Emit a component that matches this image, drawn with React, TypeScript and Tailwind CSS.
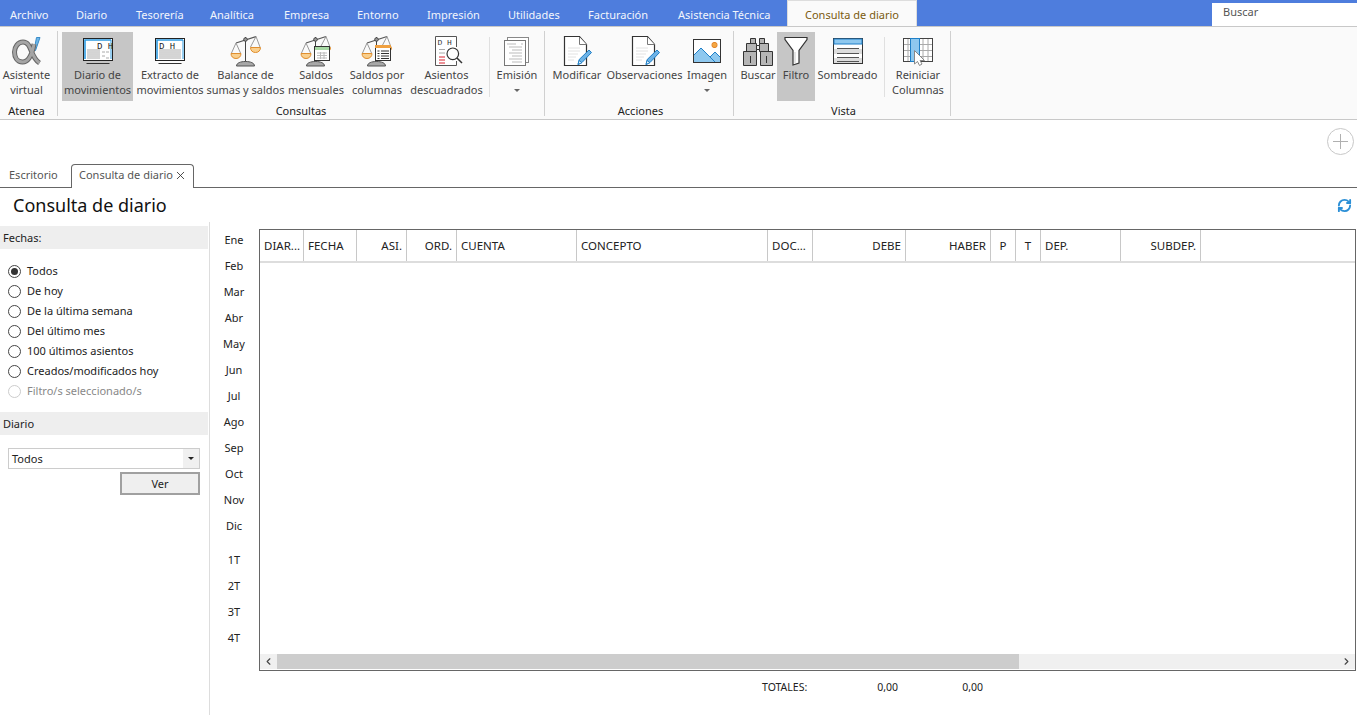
import React from "react";
import { RefreshCw, X, ChevronLeft, ChevronRight } from "lucide-react";

const menus = [
  { label: "Archivo", w: "w-[66px]" },
  { label: "Diario", w: "w-[60px]" },
  { label: "Tesorería", w: "w-[74px]" },
  { label: "Analítica", w: "w-[74px]" },
  { label: "Empresa", w: "w-[73px]" },
  { label: "Entorno", w: "w-[70px]" },
  { label: "Impresión", w: "w-[81px]" },
  { label: "Utilidades", w: "w-[80px]" },
  { label: "Facturación", w: "w-[90px]" },
  { label: "Asistencia Técnica", w: "w-[119px]" },
];

const Screen = ({ head, right }: { head: string; right?: boolean }) => (
  <svg width="32" height="28" viewBox="0 0 32 28">
    <rect x="1.5" y="1.5" width="29" height="22" fill="#fff" stroke="#222" />
    <path d="M3 22V3h26" fill="none" stroke="#2f9be0" strokeWidth="1.6" />
    <path d="M29 3v19" stroke="#2f9be0" strokeWidth="1" />
    <text x={right ? 15 : 5} y="11.500" fontSize="9" fill="#222" fontFamily="Liberation Mono">{head}</text>
    {[13, 15, 17, 19, 21].map((y) => (
      <path key={y} d={`M5 ${y}h${right ? 13 : 22}`} stroke="#aaa" />
    ))}
    {right && <path d="M20 15h3M24 15h3M20 19h3M24 21h3" stroke="#aaa" />}
    <path d="M4.5 26.5h23" stroke="#333" />
  </svg>
);

const Scale = ({ extra }: { extra?: "calendar" | "list" }) => (
  <svg width="32" height="32" viewBox="0 0 32 32">
    <path d="M6 8 26 1.5" stroke="#555" strokeWidth="1.3" fill="none" />
    <path d="M15.5 2v25" stroke="#444" />
    <path d="M6 8 1.5 18M6 8l4.5 10M26 1.5 20.5 12M26 1.5 30 12" stroke="#999" fill="none" />
    <path d="M1 18.5h10c0 3-2 5-5 5s-5-2-5-5z" fill="#f9cf8d" stroke="#e08e2e" />
    <path d="M20.5 12.5h10c0 3-2 5-5 5s-5-2-5-5z" fill="#f9cf8d" stroke="#e08e2e" />
    <circle cx="15.5" cy="4.5" r="1.8" fill="#999" stroke="#444" />
    <path d="M6.5 31c0-3 4-4.500 9-4.500s9 1.500 9 4.500z" fill="#a8a8a8" stroke="#555" />
    {extra === "calendar" && (
      <g>
        <rect x="14.500" y="11.500" width="15" height="14" fill="#fff" stroke="#333" />
        <rect x="15" y="12" width="14" height="3" fill="#a6d8a3" />
        <path d="M17 18h10M17 20.500h10M17 23h10M20.500 17v7M24 17v7" stroke="#bbb" />
      </g>
    )}
    {extra === "list" && (
      <g>
        <rect x="14.500" y="11.500" width="15" height="14" fill="#fff" stroke="#333" />
        <rect x="14" y="10" width="16" height="3" fill="#f0a040" />
        <path d="M16.500 16h2M20 16h8M16.500 18.500h2M20 18.500h8M16.500 21h2M20 21h8M16.500 23.500h2M20 23.500h8" stroke="#333" />
      </g>
    )}
  </svg>
);

const Doc = () => (
  <svg width="32" height="32" viewBox="0 0 32 32">
    <path d="M3.500 1.500h15l7 8v21h-22z" fill="#fff" stroke="#333" strokeWidth="1.200" />
    <path d="M18.500 2v7.500h7" fill="#fff" stroke="#777" />
    <path d="M7 13h12M7 16h12M7 19h10M7 22h8M7 25h6" stroke="#e2e2e2" />
    <path d="M17 29.500l1.200-5L28 15l2.500 2.500-9.500 10z" fill="#6db2e6" stroke="#1f7fc7" />
    <path d="M17 29.500l1.200-4 2.600 2.200z" fill="#fff" stroke="#1f7fc7" />
  </svg>
);

const icons: Record<string, React.ReactNode> = {
  alpha: (
    <svg width="34" height="32" viewBox="0 0 34 32">
      <path d="M26.500 2.500H30L25.500 15.500H24z" fill="#6db7ea" stroke="#3a8cc7" />
      <path d="M24 9C22 20 19 27 12.500 27 7 27 4.500 22 4.500 17S8 7 13 7c9 0 7 15 16.500 21" fill="none" stroke="#666" strokeWidth="5" />
      <path d="M24 9C22 20 19 27 12.500 27 7 27 4.500 22 4.500 17S8 7 13 7c9 0 7 15 16.500 21" fill="none" stroke="#a5a5a5" strokeWidth="3" />
    </svg>
  ),
  diario: <Screen head="D H" right />,
  extracto: <Screen head="D  H" />,
  balance: <Scale />,
  mensuales: <Scale extra="calendar" />,
  columnas: <Scale extra="list" />,
  descuadrados: (
    <svg width="32" height="32" viewBox="0 0 32 32">
      <path d="M25.500 12V1.500h-21v29h21V26" fill="#fff" stroke="#555" />
      <text x="6.500" y="10" fontSize="8" fill="#333" fontFamily="Liberation Mono">D  H</text>
      <path d="M8 14.500h6M8 18h6" stroke="#aaa" />
      <path d="M8 22h6M8 25h6M8 28h6" stroke="#d9232e" />
      <circle cx="21.800" cy="18.800" r="5.800" fill="#fff" stroke="#333" strokeWidth="1.200" />
      <path d="M26 23l5 5" stroke="#333" strokeWidth="1.500" />
    </svg>
  ),
  emision: (
    <svg width="30" height="32" viewBox="0 0 30 32">
      <rect x="5.500" y="2.500" width="21" height="25" fill="#fff" stroke="#888" />
      <rect x="2.500" y="5.500" width="21" height="25" fill="#fff" stroke="#777" />
      <path d="M5 9h9M19 9h2M7 12h13M10 15h10M7 18h13M10 21h10M7 24h13M10 27h10" stroke="#bbb" />
    </svg>
  ),
  doc: <Doc />,
  imagen: (
    <svg width="30" height="26" viewBox="0 0 30 26">
      <rect x="1.500" y="1.500" width="27" height="23" fill="#fff" stroke="#333" />
      <path d="M2 17l7-7 9 9 5-5 5 5v5H2z" fill="#8ec8ef" />
      <path d="M2 17l7-7 9 9 5-5 5 5M18 19l5 5" fill="none" stroke="#1f7fc7" />
      <rect x="20" y="4.500" width="5" height="5" rx="2" fill="#f5a742" stroke="#e2842a" />
    </svg>
  ),
  buscar: (
    <svg width="32" height="32" viewBox="0 0 32 32">
      <path d="M8.500 3.500h5v5h-5zM17.500 3.500h5v5h-5z" fill="#b5b5b5" stroke="#333" />
      <path d="M4.500 8.500h10v8h-10zM17.500 8.500h9v8h-9z" fill="#b5b5b5" stroke="#333" />
      <path d="M14.500 10.500h3v4h-3z" fill="#eee" stroke="#333" />
      <path d="M1.500 16.500h13v14h-13zM18.500 16.500h12v14h-12z" fill="#b5b5b5" stroke="#333" />
      <path d="M8.500 21v7M24.500 21v7" stroke="#333" />
    </svg>
  ),
  filtro: (
    <svg width="24" height="32" viewBox="0 0 24 32">
      <path d="M1 2.500h22v2L15 15.500V28l-6 2V15.500L1 4.500z" fill="#fff" stroke="#333" strokeWidth="1.200" />
      <path d="M11 17v11" stroke="#ccc" />
    </svg>
  ),
  sombreado: (
    <svg width="30" height="28" viewBox="0 0 30 28">
      <rect x="0.500" y="1.500" width="29" height="25" fill="#fff" stroke="#333" />
      <rect x="1" y="2" width="28" height="5" fill="#8ec8ef" stroke="#1f7fc7" />
      <rect x="1" y="12" width="28" height="5" fill="#ddd" />
      <rect x="1" y="21" width="28" height="5" fill="#ddd" />
      <path d="M4 11.500h22M4 16.500h22M4 20.500h22M4 24.500h22" stroke="#555" />
    </svg>
  ),
  reiniciar: (
    <svg width="30" height="30" viewBox="0 0 30 30">
      <rect x="0.500" y="2.500" width="29" height="23" fill="#fff" stroke="#444" />
      <path d="M20 3v22M25 3v22M1 8.500h28M1 14.500h28M1 20.500h28M5 3v22" stroke="#aaa" />
      <rect x="7.500" y="2.500" width="9" height="23" fill="#8ec8ef" stroke="#1f7fc7" />
      <path d="M11.500 14.500V28l3-2.500 2 4 2.500-1.500-2-3.500h4.500z" fill="#fff" stroke="#888" />
    </svg>
  ),
};

type Btn = { icon: string; l1: string; l2?: string; w: string; on?: boolean; arrow?: boolean };

const RibbonButton = ({ b }: { b: Btn }) => (
  <div className={`${b.w} h-[69px] flex flex-col items-center shrink-0 ${b.on ? "bg-[#c6c6c6]" : ""}`}>
    <div className="h-[35px] pt-[2px] flex items-center justify-center">{icons[b.icon]}</div>
    <div className="text-center leading-[15px] whitespace-nowrap">{b.l1}</div>
    {b.l2 && <div className="text-center leading-[15px] whitespace-nowrap">{b.l2}</div>}
    {b.arrow && <div className="mt-[7px] w-0 h-0 border-x-[3px] border-x-transparent border-t-[3px] border-t-[#666]" />}
  </div>
);

const Group = ({ label, w, pl, children }: { label: string; w: string; pl: string; children: React.ReactNode }) => (
  <div className={`${w} shrink-0 h-[85px] border-r border-[#d0d0d0] flex flex-col ${pl} mt-[4px]`}>
    <div className="flex h-[69px] mt-[1px] shrink-0">{children}</div>
    <div className="text-center text-[#222] leading-[20px] -ml-[4px]">{label}</div>
  </div>
);

const Divider = ({ m }: { m: string }) => <div className={`w-px h-[60px] bg-[#e0e0e0] shrink-0 mt-[5px] ${m}`} />;

const columns = [
  { t: "DIAR...", w: "w-[44px]", a: "text-left" },
  { t: "FECHA", w: "w-[53px]", a: "text-left" },
  { t: "ASI.", w: "w-[50px]", a: "text-right" },
  { t: "ORD.", w: "w-[50px]", a: "text-right" },
  { t: "CUENTA", w: "w-[120px]", a: "text-left" },
  { t: "CONCEPTO", w: "w-[191px]", a: "text-left" },
  { t: "DOC...", w: "w-[45px]", a: "text-left" },
  { t: "DEBE", w: "w-[93px]", a: "text-right" },
  { t: "HABER", w: "w-[85px]", a: "text-right" },
  { t: "P", w: "w-[25px]", a: "text-center" },
  { t: "T", w: "w-[25px]", a: "text-center" },
  { t: "DEP.", w: "w-[80px]", a: "text-left" },
  { t: "SUBDEP.", w: "w-[80px]", a: "text-right" },
];

const radios = ["Todos", "De hoy", "De la última semana", "Del último mes", "100 últimos asientos", "Creados/modificados hoy", "Filtro/s seleccionado/s"];
const months = ["Ene", "Feb", "Mar", "Abr", "May", "Jun", "Jul", "Ago", "Sep", "Oct", "Nov", "Dic"];
const quarters = ["1T", "2T", "3T", "4T"];

export default function App() {
  return (
    <div className="w-[1357px] h-[715px] overflow-hidden bg-white text-[#333] text-[11px] font-['Noto_Sans','Open_Sans',sans-serif] flex flex-col">
      {/* Menu bar */}
      <div className="h-[26px] bg-[#4e7ddd] flex shrink-0 text-[#f2f5fc]">
        {menus.map((m) => (
          <div key={m.label} className={`${m.w} shrink-0 h-[26px] pl-[10px] leading-[30px] whitespace-nowrap`}>{m.label}</div>
        ))}
        <div className="w-[130px] h-[27px] bg-[#fafafa] border-x border-t border-[#ddd] text-[#7a5a10] text-center leading-[28px]">Consulta de diario</div>
        <div className="w-[145px] h-[24px] bg-white border-b border-[#777] mt-[3px] ml-auto pl-[11px] text-[#555] leading-[18px]">Buscar</div>
      </div>

      {/* Ribbon */}
      <div className="h-[94px] bg-[#fafafa] border-y border-[#c8c8c8] flex shrink-0 text-[#444]">
        <Group label="Atenea" w="w-[58px]" pl="pl-0">
          <RibbonButton b={{ icon: "alpha", l1: "Asistente", l2: "virtual", w: "w-[53px]" }} />
        </Group>
        <Group label="Consultas" w="w-[487px]" pl="pl-[4px]">
          <RibbonButton b={{ icon: "diario", l1: "Diario de", l2: "movimientos", w: "w-[71px]", on: true }} />
          <div className="w-[3px]" />
          <RibbonButton b={{ icon: "extracto", l1: "Extracto de", l2: "movimientos", w: "w-[68px]" }} />
          <div className="w-[3px]" />
          <RibbonButton b={{ icon: "balance", l1: "Balance de", l2: "sumas y saldos", w: "w-[77px]" }} />
          <div className="w-[5px]" />
          <RibbonButton b={{ icon: "mensuales", l1: "Saldos", l2: "mensuales", w: "w-[54px]" }} />
          <div className="w-[5px]" />
          <RibbonButton b={{ icon: "columnas", l1: "Saldos por", l2: "columnas", w: "w-[58px]" }} />
          <div className="w-[4px]" />
          <RibbonButton b={{ icon: "descuadrados", l1: "Asientos", l2: "descuadrados", w: "w-[73px]" }} />
          <Divider m="ml-[6px] mr-[6px]" />
          <RibbonButton b={{ icon: "emision", l1: "Emisión", w: "w-[42px]", arrow: true }} />
        </Group>
        <Group label="Acciones" w="w-[189px]" pl="pl-[7px]">
          <RibbonButton b={{ icon: "doc", l1: "Modificar", w: "w-[50px]" }} />
          <div className="w-[5px]" />
          <RibbonButton b={{ icon: "doc", l1: "Observaciones", w: "w-[75px]" }} />
          <div className="w-[6px]" />
          <RibbonButton b={{ icon: "imagen", l1: "Imagen", w: "w-[38px]", arrow: true }} />
        </Group>
        <Group label="Vista" w="w-[217px]" pl="pl-[7px]">
          <RibbonButton b={{ icon: "buscar", l1: "Buscar", w: "w-[34px]" }} />
          <div className="w-[2px]" />
          <RibbonButton b={{ icon: "filtro", l1: "Filtro", w: "w-[38px]", on: true }} />
          <div className="w-[3px]" />
          <RibbonButton b={{ icon: "sombreado", l1: "Sombreado", w: "w-[59px]" }} />
          <Divider m="ml-[7px] mr-[7px]" />
          <RibbonButton b={{ icon: "reiniciar", l1: "Reiniciar", l2: "Columnas", w: "w-[52px]" }} />
        </Group>
      </div>

      {/* Add button row */}
      <div className="h-[44px] flex justify-end items-start shrink-0 pr-[3px] pt-[8px]">
        <div className="w-[27px] h-[27px] rounded-full border border-[#c8c8c8] flex items-center justify-center">
          <svg width="17" height="17" viewBox="0 0 17 17"><path d="M8.500 1v15M1 8.500h15" stroke="#b0b0b0" /></svg>
        </div>
      </div>

      {/* Tabs */}
      <div className="h-[24px] border-b border-[#666] flex items-end shrink-0 text-[#555]">
        <div className="w-[71px] h-[23px] pl-[9px] leading-[22px]">Escritorio</div>
        <div className="w-[123px] h-[24px] -mb-px bg-white border border-b-0 border-[#666] rounded-t-[4px] pl-[7px] flex items-center gap-[1px] whitespace-nowrap pb-[2px]">
          Consulta de diario
          <X size={13} strokeWidth={1.6} className="text-[#333]" />
        </div>
      </div>

      {/* Title */}
      <div className="h-[34px] flex items-center justify-between shrink-0 pl-[13px] pr-[5px]">
        <div className="text-[18px] text-[#111]">Consulta de diario</div>
        <RefreshCw size={15} strokeWidth={3} className="text-[#2b8fd6]" />
      </div>

      {/* Content */}
      <div className="flex-1 flex min-h-0">
        <div className="w-[210px] shrink-0 border-r border-[#ddd] pt-[4px]">
          <div className="w-[208px] h-[23px] bg-[#eeeeee] pl-[3px] leading-[24px] text-[#222]">Fechas:</div>
          <div className="pt-[12px] pl-[8px] flex flex-col">
            {radios.map((r, i) => {
              const off = i === radios.length - 1;
              return (
                <div key={r} className={`h-[20px] flex items-center gap-[6px] ${off ? "text-[#888]" : "text-[#222]"}`}>
                  <span className={`w-[13px] h-[13px] rounded-full border flex items-center justify-center bg-white ${off ? "border-[#ccc]" : "border-[#444]"}`}>
                    {i === 0 && <span className="w-[7px] h-[7px] rounded-full bg-[#333]" />}
                  </span>
                  {r}
                </div>
              );
            })}
          </div>
          <div className="w-[208px] h-[23px] bg-[#eeeeee] pl-[3px] leading-[24px] text-[#222] mt-[11px]">Diario</div>
          <div className="ml-[8px] mt-[13px] w-[192px] h-[21px] border border-[#ccc] flex items-center justify-between">
            <span className="pl-[3px] pt-[2px] text-[#222]">Todos</span>
            <span className="w-[16px] h-[19px] bg-[#f0f0f0] flex items-center justify-center">
              <span className="w-0 h-0 border-x-[3px] border-x-transparent border-t-[3px] border-t-[#222]" />
            </span>
          </div>
          <div className="ml-[120px] mt-[3px] w-[80px] h-[23px] border-2 border-[#a0a0a0] bg-[#efefef] text-center leading-[19px] text-[#222]">Ver</div>
        </div>

        <div className="w-[49px] shrink-0 flex flex-col items-center pt-[5px] text-[#222]">
          {months.map((m) => (
            <div key={m} className="h-[26px] leading-[26px] pr-[1px]">{m}</div>
          ))}
          <div className="h-[8px]" />
          {quarters.map((q) => (
            <div key={q} className="h-[26px] leading-[26px] pr-[1px]">{q}</div>
          ))}
        </div>

        <div className="flex-1 flex flex-col min-w-0 pr-px pt-[7px]">
          <div className="h-[442px] border border-[#666] flex flex-col">
            <div className="h-[33px] border-b-2 border-[#ddd] flex shrink-0 text-[#222] text-[11.5px]">
              {columns.map((c) => (
                <div key={c.t} className={`${c.w} shrink-0 h-[31px] border-r border-[#c8c8c8] px-[4px] leading-[31px] whitespace-nowrap ${c.a}`}>{c.t}</div>
              ))}
            </div>
            <div className="flex-1" />
            <div className="h-[15px] bg-[#f0f0f0] flex items-center mb-px">
              <ChevronLeft size={11} strokeWidth={2.5} className="w-[17px] text-[#444]" />
              <div className="w-[742px] h-[15px] bg-[#cdcdcd]" />
              <div className="flex-1" />
              <ChevronRight size={11} strokeWidth={2.5} className="w-[17px] text-[#444]" />
            </div>
          </div>
          <div className="flex h-[34px] items-center text-[#222] pl-[503px] text-[10.5px]">
            <span className="w-[46px] whitespace-nowrap">TOTALES:</span>
            <span className="w-[90px] text-right">0,00</span>
            <span className="w-[85px] text-right">0,00</span>
          </div>
        </div>
      </div>
    </div>
  );
}
